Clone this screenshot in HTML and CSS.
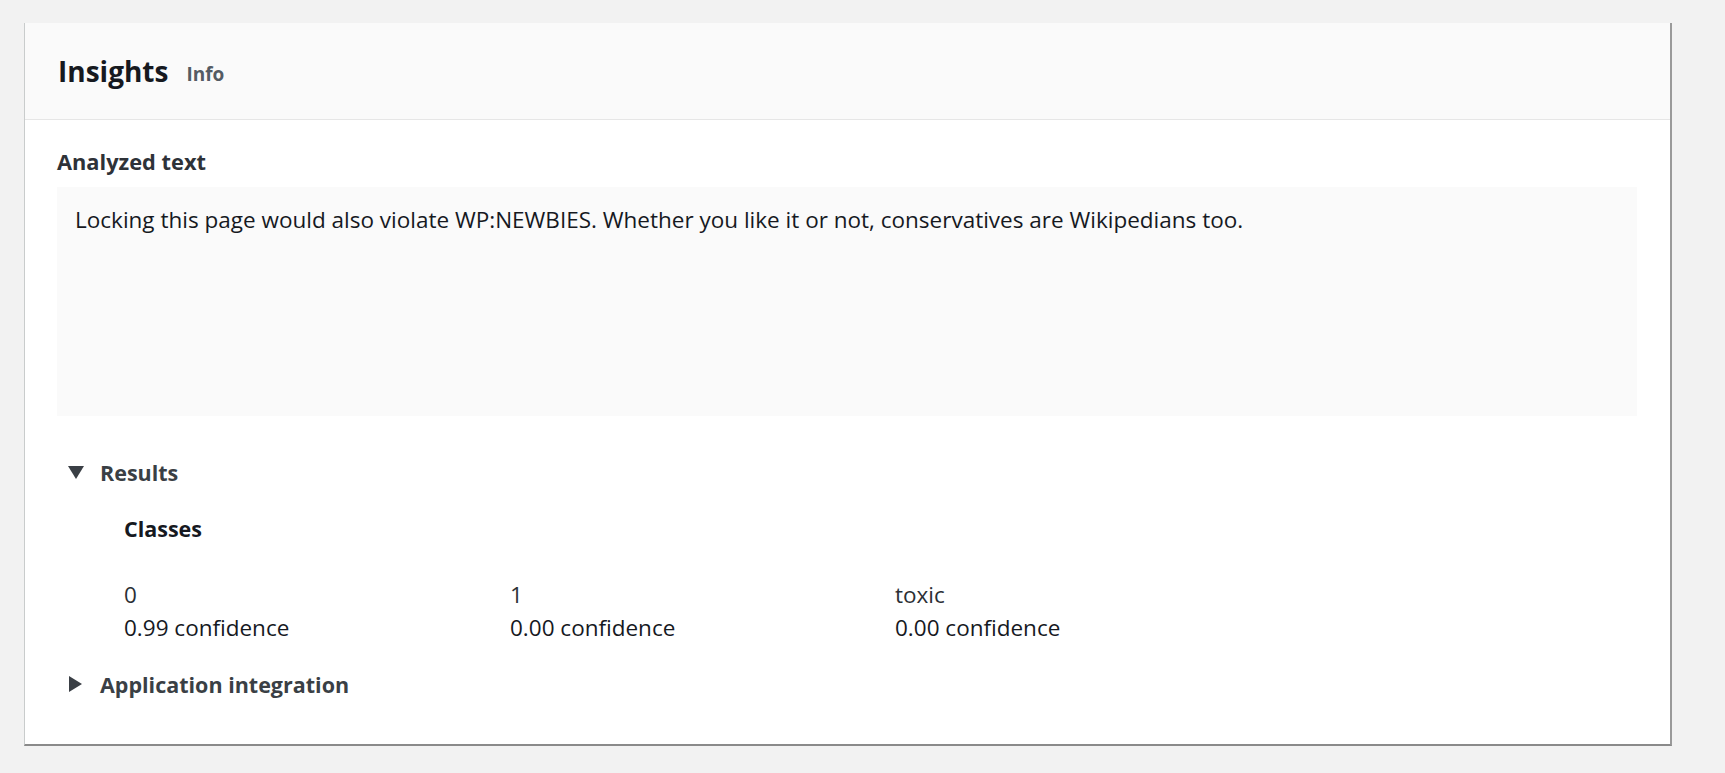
FILE: index.html
```html
<!DOCTYPE html>
<html lang="en">
<head>
<meta charset="utf-8">
<title>Insights</title>
<link rel="stylesheet" href="styles.css">
</head>
<body>
<div class="page">
  <section class="card">
    <header class="card-header">
      <h2 class="title">Insights</h2>
      <span class="info">Info</span>
    </header>
    <div class="card-body">
      <div class="field-label">Analyzed text</div>
      <div class="analyzed">Locking this page would also violate WP:NEWBIES. Whether you like it or not, conservatives are Wikipedians too.</div>

      <div class="expander open">
        <span class="caret caret-down"></span>
        <span class="expander-label">Results</span>
      </div>
      <div class="results">
        <div class="classes-title">Classes</div>
        <div class="classes-grid">
          <div class="class-item"><div class="class-name">0</div><div class="class-conf">0.99 confidence</div></div>
          <div class="class-item"><div class="class-name">1</div><div class="class-conf">0.00 confidence</div></div>
          <div class="class-item"><div class="class-name">toxic</div><div class="class-conf">0.00 confidence</div></div>
        </div>
      </div>

      <div class="expander closed">
        <span class="caret caret-right"></span>
        <span class="expander-label">Application integration</span>
      </div>
    </div>
  </section>
</div>
</body>
</html>
```

FILE: styles.css
```css
html, body {
  margin: 0;
  padding: 0;
  background: #f2f2f2;
  font-family: "Open Sans", "Noto Sans", Arial, sans-serif;
  color: #16191f;
}

.page {
  padding: 23px 0 0 24px;
}

.card {
  width: 1648px;
  height: 723px;
  box-sizing: border-box;
  background: #ffffff;
  border-left: 1px solid #c9cccc;
  border-right: 2px solid #9a9a9a;
  border-bottom: 2px solid #8a8a8a;
  display: flex;
  flex-direction: column;
}

.card-header {
  height: 97px;
  box-sizing: border-box;
  background: #fafafa;
  border-bottom: 1px solid #e6e6e6;
  display: flex;
  align-items: center;
  padding-left: 33px;
  gap: 18px;
}

.title {
  margin: 0;
  font-size: 28px;
  font-weight: 700;
  color: #16191f;
  line-height: 32px;
}

.info {
  font-size: 19px;
  font-weight: 700;
  color: #545b64;
  margin-top: 6px;
}

.card-body {
  padding: 30px 33px 0 32px;
}

.field-label {
  font-size: 21.8px;
  font-weight: 700;
  line-height: 24px;
  color: #2e3238;
}

.analyzed {
  margin-top: 13px;
  height: 229px;
  box-sizing: border-box;
  background: #fafafa;
  padding: 21px 18px;
  font-size: 22.5px;
  line-height: 24px;
  color: #16191f;
}

.expander {
  display: flex;
  align-items: center;
  height: 24px;
  padding-left: 11px;
  gap: 16px;
}

.expander.open {
  margin-top: 44px;
}

.expander.closed {
  margin-top: 28px;
}

.expander-label {
  font-size: 21.5px;
  font-weight: 700;
  color: #3a3f45;
}

.caret {
  width: 0;
  height: 0;
  display: inline-block;
}

.caret-down {
  border-left: 8px solid transparent;
  border-right: 8px solid transparent;
  border-top: 13px solid #3a3f45;
}

.caret-right {
  margin-left: 1px;
  border-top: 8px solid transparent;
  border-bottom: 8px solid transparent;
  border-left: 13px solid #3a3f45;
  margin-right: 2px;
}

.results {
  padding-left: 67px;
}

.classes-title {
  margin-top: 33px;
  font-size: 21.5px;
  font-weight: 700;
  line-height: 24px;
  color: #16191f;
}

.classes-grid {
  margin-top: 37px;
  display: grid;
  grid-template-columns: 386px 385px 385px;
}

.class-name,
.class-conf {
  font-size: 22.5px;
  line-height: 33px;
  color: #16191f;
}

.class-name {
  color: #2b2f35;
}
```
